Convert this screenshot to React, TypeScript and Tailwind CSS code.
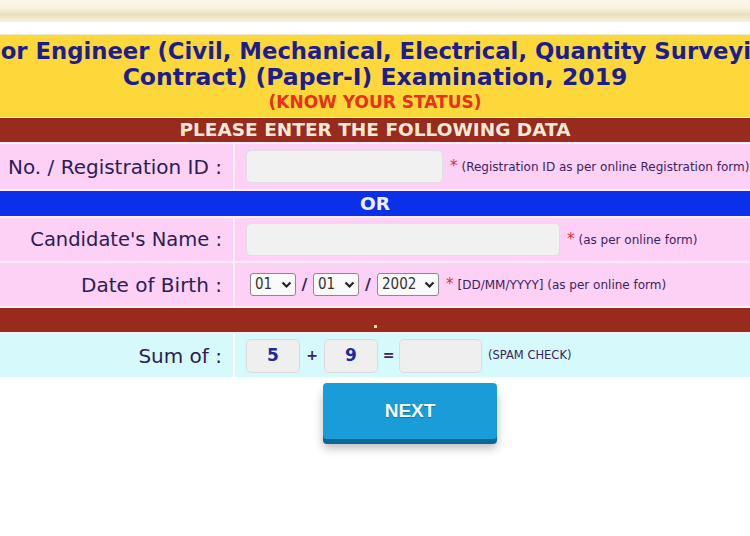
import React from "react";

function Sel({ value, w }: { value: string; w: string }) {
  return (
    <div
      className={`flex h-[23px] items-center justify-between rounded-[3px] border border-[#8a8a8a] bg-[#fafafa] pl-[4px] pr-[3px] font-['DejaVu_Sans_Condensed','DejaVu_Sans',sans-serif] text-[15px] text-[#333] ${w}`}
    >
      <span>{value}</span>
      <svg width="11" height="8" viewBox="0 0 11 8">
        <path d="M1.5 1.5 L5.5 5.5 L9.5 1.5" fill="none" stroke="#222" strokeWidth="2.2" />
      </svg>
    </div>
  );
}

export default function App() {
  return (
    <div className="relative h-[536px] w-[750px] overflow-hidden bg-white font-['DejaVu_Sans',sans-serif]">
      {/* top blurred band */}
      <div className="h-[22px] bg-[linear-gradient(to_bottom,#fbf8ea_0%,#f7f1dc_40%,#e9e0c2_65%,#f6f1de_100%)]" />
      <div className="h-[12px] bg-white" />
      <div className="h-[1px] bg-[#eee8d0]" />

      {/* yellow header */}
      <div className="flex h-[82px] flex-col items-center bg-[#fcd83a] pt-[3px] font-bold text-[#1d1d8e]">
        <div className="flex w-full justify-start overflow-hidden">
          <div className="ml-[-48px] shrink-0 whitespace-nowrap text-[22.75px] leading-[26px]">
            Junior Engineer (Civil, Mechanical, Electrical, Quantity Surveying and
          </div>
        </div>
        <div className="whitespace-nowrap text-[23.5px] leading-[26px]">
          Contract) (Paper-I) Examination, 2019
        </div>
        <div className="whitespace-nowrap text-[17px] leading-[24px] text-[#e8301a]">
          (KNOW YOUR STATUS)
        </div>
      </div>

      <div className="flex flex-col gap-[2px] bg-[#f6eef4] pt-[1px]">
        {/* brown bar */}
        <div className="flex h-[24px] items-center justify-center bg-[#982a1e] text-[18.5px] font-bold text-[#f7e9d6]">
          PLEASE ENTER THE FOLLOWING DATA
        </div>

        {/* registration */}
        <div className="flex h-[45px] gap-[2px]">
          <div className="flex w-[233px] items-center justify-end bg-[#fdd0f6] pr-[11px] text-[20px] whitespace-nowrap text-[#2b1d55]">
            No. / Registration ID :
          </div>
          <div className="flex flex-1 items-center bg-[#fdd0f6] pl-[11px]">
            <div className="h-[33px] w-[197px] rounded-[5px] border border-[#e2dde2] bg-[#f1f1f1]" />
            <span className="ml-[7px] text-[15px] leading-none text-[#e0303a]">*</span>
            <span className="ml-[4px] whitespace-nowrap text-[12px] text-[#3a2560]">
              (Registration ID as per online Registration form)
            </span>
          </div>
        </div>

        {/* OR */}
        <div className="flex h-[25px] items-center justify-center bg-[#0a30ea] text-[18.5px] font-bold text-[#eef0ff]">
          OR
        </div>

        {/* name */}
        <div className="flex h-[43px] gap-[2px]">
          <div className="flex w-[233px] items-center justify-end bg-[#fdd0f6] pr-[11px] text-[19.5px] whitespace-nowrap text-[#2b1d55]">
            Candidate's Name :
          </div>
          <div className="flex flex-1 items-center bg-[#fdd0f6] pl-[11px]">
            <div className="h-[33px] w-[314px] rounded-[5px] border border-[#e2dde2] bg-[#f1f1f1]" />
            <span className="ml-[7px] text-[15px] leading-none text-[#e0303a]">*</span>
            <span className="ml-[4px] whitespace-nowrap text-[12px] text-[#3a2560]">
              (as per online form)
            </span>
          </div>
        </div>

        {/* dob */}
        <div className="flex h-[43px] gap-[2px]">
          <div className="flex w-[233px] items-center justify-end bg-[#fdd0f6] pr-[11px] text-[20px] whitespace-nowrap text-[#2b1d55]">
            Date of Birth :
          </div>
          <div className="flex flex-1 items-center bg-[#fdd0f6] pl-[15px]">
            <Sel value="01" w="w-[46px]" />
            <span className="w-[17px] text-center text-[16px] font-bold text-[#3a2560]">/</span>
            <Sel value="01" w="w-[46px]" />
            <span className="w-[18px] text-center text-[16px] font-bold text-[#3a2560]">/</span>
            <Sel value="2002" w="w-[62px]" />
            <span className="ml-[7px] text-[15px] leading-none text-[#e0303a]">*</span>
            <span className="ml-[4px] whitespace-nowrap text-[12px] text-[#3a2560]">
              [DD/MM/YYYY] (as per online form)
            </span>
          </div>
        </div>

        {/* brown bar with dot */}
        <div className="flex h-[24px] items-end justify-center bg-[#982a1e] pb-[4px]">
          <div className="h-[3px] w-[3px] bg-[#f7dcc0]" />
        </div>

        {/* sum */}
        <div className="flex h-[43px] gap-[2px] bg-white">
          <div className="flex w-[233px] items-center justify-end bg-[#d6f9fb] pr-[11px] text-[20px] whitespace-nowrap text-[#2b1d55]">
            Sum of :
          </div>
          <div className="flex flex-1 items-center bg-[#d6f9fb] pl-[11px]">
            <div className="flex h-[34px] w-[54px] items-center justify-center rounded-[5px] border border-[#dcdcdc] bg-[#efefef] text-[17px] font-bold text-[#1d2a9a]">
              5
            </div>
            <span className="w-[24px] text-center text-[14px] font-bold text-[#3a2560]">+</span>
            <div className="flex h-[34px] w-[54px] items-center justify-center rounded-[5px] border border-[#dcdcdc] bg-[#efefef] text-[17px] font-bold text-[#1d2a9a]">
              9
            </div>
            <span className="w-[21px] text-center text-[14px] font-bold text-[#3a2560]">=</span>
            <div className="h-[34px] w-[83px] rounded-[5px] border border-[#dcdcdc] bg-[#efefef]" />
            <span className="ml-[6px] whitespace-nowrap text-[11.5px] text-[#3a2560]">
              (SPAM CHECK)
            </span>
          </div>
        </div>
      </div>

      {/* next button */}
      <div className="flex justify-center pl-[70px] pt-[6px]">
        <div className="flex h-[56px] w-[174px] items-center justify-center rounded-[4px] bg-[#1a9cd8] font-['Liberation_Sans',Arial,sans-serif] text-[19px] font-bold text-[#f2f8fb] shadow-[0_5px_0_#0b6894,0_9px_10px_rgba(0,0,0,0.28)] [text-shadow:0_1px_1px_rgba(0,0,0,0.25)]">
          NEXT
        </div>
      </div>
    </div>
  );
}
